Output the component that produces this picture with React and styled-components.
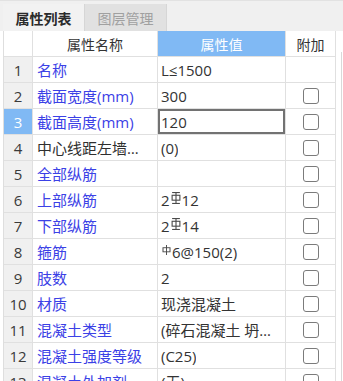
import styled, { createGlobalStyle } from "styled-components";

const GlobalStyle = createGlobalStyle`
  html, body {
    margin: 0;
    padding: 0;
    background: #ffffff;
    overflow: hidden;
  }
  body {
    font-family: "Open Sans", "Noto Sans CJK SC", sans-serif;
    color: #333333;
  }
`

const Panel = styled.div`
  width: 343px;
  height: 381px;
  display: flex;
  flex-direction: column;
  background: #ffffff;
  overflow: hidden;
`
const TabBar = styled.div`
  height: 31px;
  flex: none;
  box-sizing: border-box;
  padding: 3px 0 0 3px;
  display: flex;
  align-items: stretch;
  background: #f0f0f0;
  border-top: 1px solid #e2e2e2;
`
const Tab = styled.div`
  width: 81px;
  display: flex;
  align-items: center;
  justify-content: center;
  font-family: "Noto Sans CJK SC", sans-serif;
  font-size: 14px;
  font-weight: ${p => (p.$active ? 700 : 400)};
  color: ${p => (p.$active ? "#2b2b2b" : "#a0a0a0")};
  background: ${p => (p.$active ? "#f2f2f2" : "#e1e1e1")};
  border-left: ${p => (p.$active ? "none" : "1px solid #d6d6d6")};
  border-right: ${p => (p.$active ? "none" : "1px solid #d6d6d6")};
`
const Body = styled.div`
  flex: 1;
  display: flex;
  padding-left: 3px;
  overflow: hidden;
`
const Table = styled.div`
  width: 333px;
  flex: none;
  border-left: 1px solid #dedede;
`
const ScrollEdge = styled.div`
  margin: 21px 0 0 4px;
  width: 2px;
  border-left: 1px solid #d9d9d9;
`
const Row = styled.div`
  display: grid;
  grid-template-columns: 29px 125px 128px 50px;
  height: 26px;
`
const Cell = styled.div`
  box-sizing: border-box;
  display: flex;
  align-items: center;
  min-width: 0;
  border-right: 1px solid #e0e0e0;
  border-bottom: 1px solid #e0e0e0;
  font-size: 15px;
`
const IndexCell = styled(Cell)`
  justify-content: center;
  font-size: 15px;
  color: ${p => (p.$selected ? "#ffffff" : "#3a3a3a")};
  background: ${p => (p.$selected ? "#80b9f4" : "#f0f0f0")};
`
const HeadCell = styled(Cell)`
  justify-content: center;
  font-family: "Noto Sans CJK SC", sans-serif;
  font-size: 14px;
  color: ${p => (p.$accent ? "#ffffff" : "#333333")};
  background: ${p => (p.$accent ? "#80b9f4" : "#ffffff")};
`
const Text = styled.span`
  display: block;
  white-space: nowrap;
  overflow: hidden;
  text-overflow: ellipsis;
`
const NameCell = styled(Cell)`
  padding: 0 6px 0 4px;
  color: ${p => (p.$plain ? "#2f2f2f" : "#3b41e6")};
`
const ValueCell = styled(Cell)`
  padding: 0 8px 0 3px;
  color: #333333;
  box-shadow: ${p => (p.$editing ? "inset 0 0 0 2px #727272" : "none")};
`
const CheckCell = styled(Cell)`
  justify-content: center;
  padding-left: 1px;
`
const Box = styled.span`
  width: 16px;
  height: 16px;
  box-sizing: border-box;
  border: 1px solid #7b7b7b;
  border-radius: 3px;
  background: #ffffff;
`
const Sym = styled.svg`
  margin: 0 1px 3px 1px;
  flex: none;
`

const BarSymbol = ({ grade }) => (
  <Sym width={grade === 3 ? 10 : 9} height={grade === 3 ? 12 : 10} viewBox="0 0 9 11" preserveAspectRatio="none">
    <g fill="none" stroke="#4a4a4a" strokeWidth="1">
      <line x1="4.5" y1="0" x2="4.5" y2="11" />
      <rect x="1" y="3" width="7" height="4.5" />
      {grade === 3 && <line x1="1" y1="0.5" x2="8" y2="0.5" />}
      {grade === 3 && <line x1="1" y1="10.5" x2="8" y2="10.5" />}
    </g>
  </Sym>
)

const rows = [
  { name: "名称", value: "L≤1500", noCheck: true },
  { name: "截面宽度(mm)", value: "300" },
  { name: "截面高度(mm)", value: "120", selected: true },
  { name: "中心线距左墙皮距离(mm)", value: "(0)", plain: true },
  { name: "全部纵筋", value: "" },
  { name: "上部纵筋", value: ["2", 3, "12"] },
  { name: "下部纵筋", value: ["2", 3, "14"] },
  { name: "箍筋", value: [1, "6@150(2)"] },
  { name: "肢数", value: "2" },
  { name: "材质", value: "现浇混凝土" },
  { name: "混凝土类型", value: "(碎石混凝土 坍落度35~50mm)" },
  { name: "混凝土强度等级", value: "(C25)" },
  { name: "混凝土外加剂", value: "(无)" },
  { name: "泵送类型", value: "(混凝土泵)" },
]

const renderValue = v =>
  Array.isArray(v)
    ? v.map((part, i) => (typeof part === "number" ? <BarSymbol key={i} grade={part} /> : <span key={i}>{part}</span>))
    : <Text>{v}</Text>

const App = () => {
  return (
    <Panel>
      <GlobalStyle />
      <TabBar>
        <Tab $active>属性列表</Tab>
        <Tab>图层管理</Tab>
      </TabBar>
      <Body>
        <Table>
          <Row>
            <HeadCell />
            <HeadCell>属性名称</HeadCell>
            <HeadCell $accent>属性值</HeadCell>
            <HeadCell>附加</HeadCell>
          </Row>
          {rows.map((r, i) => (
            <Row key={i}>
              <IndexCell $selected={r.selected}>{i + 1}</IndexCell>
              <NameCell $plain={r.plain}>
                <Text>{r.name}</Text>
              </NameCell>
              <ValueCell $editing={r.selected}>{renderValue(r.value)}</ValueCell>
              <CheckCell>{!r.noCheck && <Box />}</CheckCell>
            </Row>
          ))}
        </Table>
        <ScrollEdge />
      </Body>
    </Panel>
  );
};

export default App;
